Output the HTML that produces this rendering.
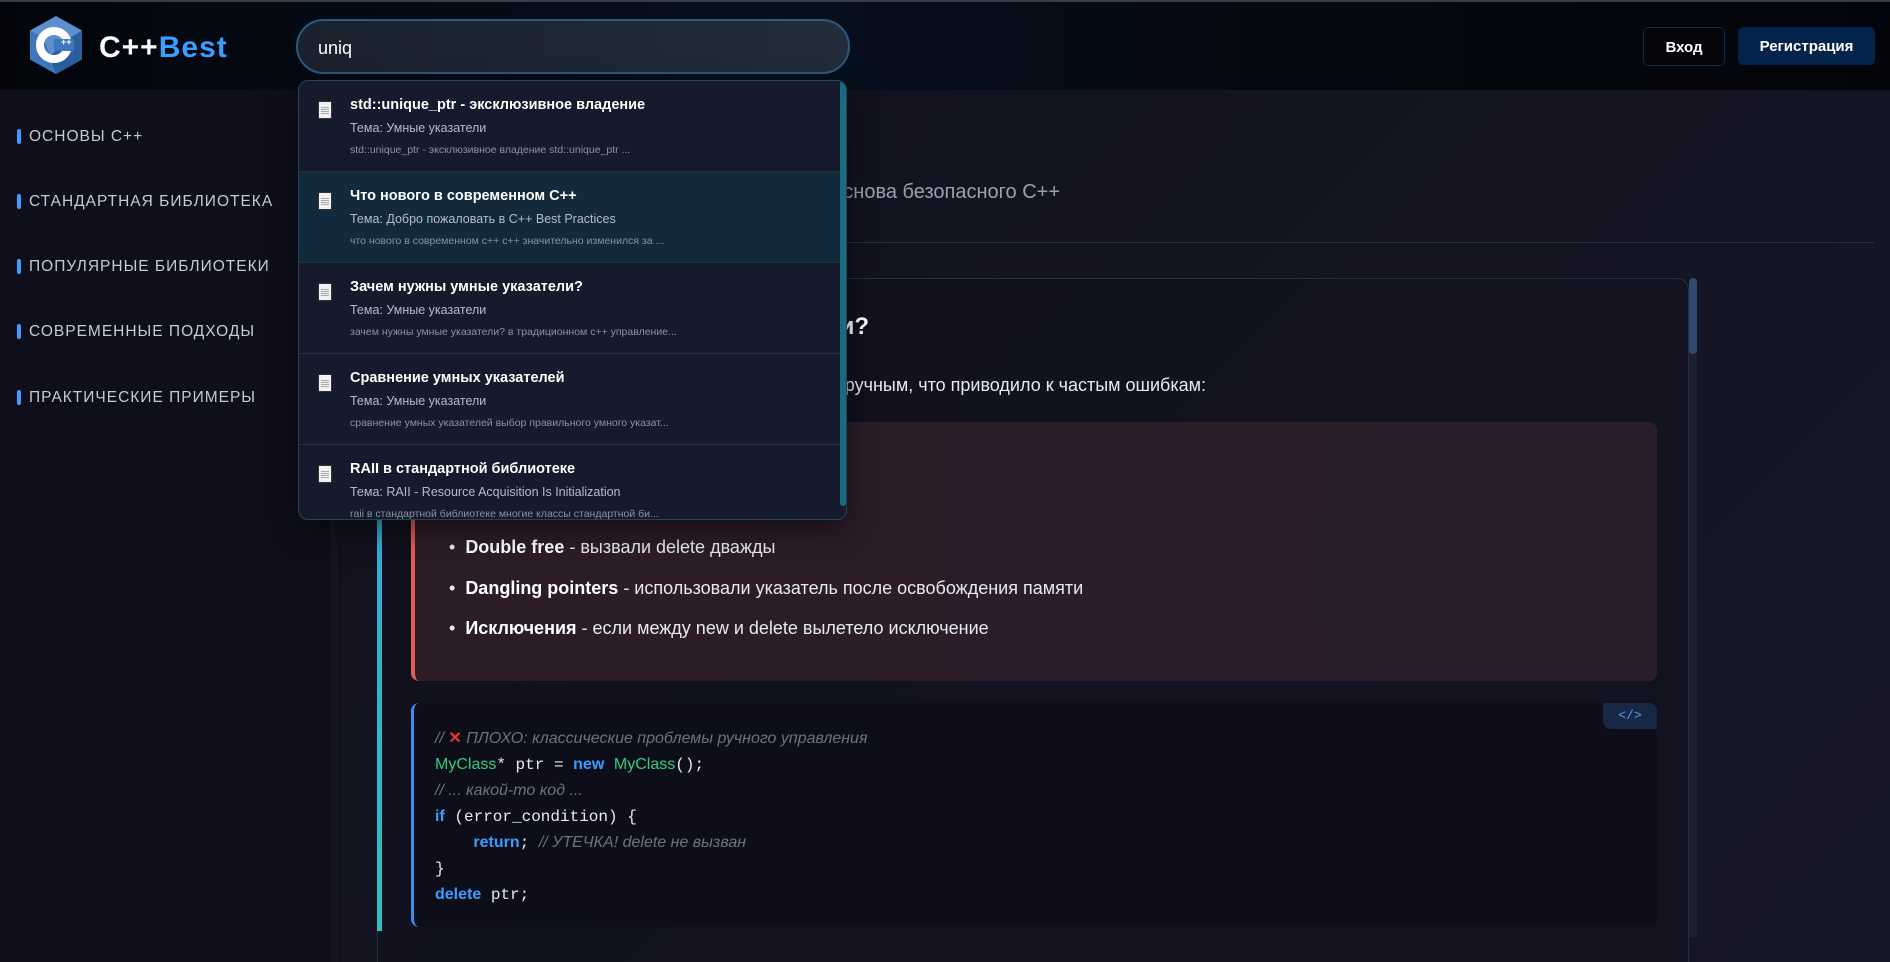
<!DOCTYPE html>
<html><head><meta charset="utf-8"><style>
*{margin:0;padding:0;box-sizing:border-box}
html{width:1890px;height:962px;overflow:hidden}
body{width:1890px;height:962px;overflow:hidden;background:#12121f;font-family:"Liberation Sans","Noto Sans CJK SC",sans-serif;position:relative;color:#e8eaf0}
.hdr{position:absolute;left:0;top:0;width:1890px;height:90px;background:linear-gradient(90deg,#03050a 0%,#061020 40%,#050810 70%,#03050a 100%);border-top:2px solid #3a3d48}
.side{position:absolute;left:0;top:90px;width:337px;height:872px;background:#0e0f1a;border-right:6px solid #15161f}
.main{position:absolute;left:343px;top:90px;width:1547px;height:872px;background:linear-gradient(135deg,#11111d,#161728)}
.nav{position:absolute;left:17px;font-size:15.5px;letter-spacing:1px;color:#c6cad4;text-transform:uppercase;font-weight:500}
.nav:before{content:"";position:absolute;left:0;top:1px;width:4px;height:15px;background:#3b9dff;border-radius:2px}
.nav span{margin-left:12px}
.abs{position:absolute;white-space:nowrap}
.dd{position:absolute;left:298px;top:80px;width:549px;height:440px;background:#151b2d;border:1px solid #1f4656;border-radius:10px;overflow:hidden;box-shadow:0 10px 30px rgba(0,0,0,.5)}
.it{position:absolute;left:0;width:543px;height:91px;border-bottom:1px solid #232c40}
.it .ic{position:absolute;left:19px;top:20px;width:14px;height:18px;background:#f2f2f2;border:1px solid #333}
.it .ic:after{content:"";position:absolute;left:2px;right:2px;top:4px;height:9px;background:repeating-linear-gradient(#f2f2f2 0 1px,#aaa 1px 2px)}
.it .t{position:absolute;left:51px;top:16px;font-size:14.5px;font-weight:bold;color:#fff;white-space:nowrap}
.it .s{position:absolute;left:51px;top:40px;font-size:12.5px;color:#b4bccb;white-space:nowrap}
.it .x{position:absolute;left:51px;top:63px;font-size:10.5px;color:#8a92a4;white-space:nowrap}
.code{font-family:"Liberation Mono",monospace;font-size:16px;color:#e8eaf0}
.cm{font-family:"Liberation Sans",sans-serif;font-style:italic;color:#6c7282;font-size:16px}
.kw{font-family:"Liberation Sans",sans-serif;font-weight:bold;color:#3b9dff;font-size:16px}
.ty{font-family:"Liberation Sans",sans-serif;color:#2fcf7f;font-size:16px}
</style></head><body>
<div class="hdr"></div>
<svg class="abs" style="left:30px;top:16px" width="52" height="58" viewBox="0 0 52 58">
<polygon points="26,0 52,14.5 52,43.5 26,58 0,43.5 0,14.5" fill="#5c8ed0"/>
<polygon points="52,14.5 52,43.5 26,58 10,49 40,22" fill="#2a5f9e"/>
<polygon points="26,58 0,43.5 0,14.5 14,22" fill="#3f77bb"/>
<circle cx="24" cy="29" r="14" fill="none" stroke="#fff" stroke-width="8"/>
<rect x="24" y="23" width="20" height="12" fill="#3f77bb"/>
<text x="31" y="29" font-size="9" fill="#fff" font-family="Liberation Sans" font-weight="bold">++</text>
</svg>
<div class="abs" style="left:99px;top:31px;font-size:30px;font-weight:bold;color:#fff;letter-spacing:1px">C++<span style="color:#3b9dff">Best</span></div>
<div class="abs" style="left:296px;top:19px;width:554px;height:55px;border:2px solid #2a5a80;border-radius:28px;background:linear-gradient(90deg,#1a222f,#222c3a)"></div>
<div class="abs" style="left:318px;top:38px;font-size:18px;color:#fff">uniq</div>
<div class="abs" style="left:1643px;top:27px;width:82px;height:39px;border:1px solid #0d2a48;border-radius:5px;color:#fff;font-weight:bold;font-size:15px;text-align:center;line-height:39px">Вход</div>
<div class="abs" style="left:1738px;top:27px;width:137px;height:38px;background:#04234a;border-radius:5px;color:#fff;font-weight:bold;font-size:15px;text-align:center;line-height:40px">Регистрация</div>

<div class="side"></div>
<div class="nav" style="top:128px"><span>Основы C++</span></div>
<div class="nav" style="top:193px"><span>Стандартная библиотека</span></div>
<div class="nav" style="top:258px"><span>Популярные библиотеки</span></div>
<div class="nav" style="top:323px"><span>Современные подходы</span></div>
<div class="nav" style="top:389px"><span>Практические примеры</span></div>

<div class="main"></div>
<div class="abs" style="left:380px;top:181px;width:680px;text-align:right;font-size:20px;color:#9aa0b2;font-weight:300">Умные указатели — основа безопасного C++</div>
<div class="abs" style="left:362px;top:242px;width:1512px;height:1px;background:#2a2c3c"></div>
<div class="abs" style="left:377px;top:278px;width:1312px;height:684px;border:1px solid #2a2d3e;border-bottom:none;border-radius:12px 12px 0 0;background:rgba(16,17,30,.6)"></div>
<div class="abs" style="left:377px;top:286px;width:5px;height:645px;background:linear-gradient(#3b9de0,#2ec0c0)"></div>
<div class="abs" style="left:1689px;top:278px;width:8px;height:660px;background:#1e2030;border-radius:4px"></div>
<div class="abs" style="left:1689px;top:278px;width:8px;height:76px;background:#2d4a6e;border-radius:4px"></div>
<div class="abs" style="left:411px;top:313px;width:458px;text-align:right;font-size:24px;font-weight:bold;color:#fff">Зачем нужны умные указатели?</div>
<div class="abs" style="left:411px;top:375px;width:795px;text-align:right;font-size:18px;color:#e8eaf0">В C++ управление памятью было ручным, что приводило к частым ошибкам:</div>

<div class="abs" style="left:411px;top:422px;width:1246px;height:259px;background:linear-gradient(90deg,#2c1c26,#2a1d2c);border-left:4px solid #e55a5a;border-radius:8px"></div>
<div class="abs" style="left:449px;top:537px;font-size:18px;color:#e8eaf0;line-height:20px">
<div style="position:absolute;top:-40px;white-space:nowrap">•&nbsp;&nbsp;<b>Утечки памяти</b> - забыли вызвать delete</div>
<div style="position:absolute;top:0;white-space:nowrap">•&nbsp;&nbsp;<b style="color:#fff">Double free</b> - вызвали delete дважды</div>
<div style="position:absolute;top:41px;white-space:nowrap">•&nbsp;&nbsp;<b style="color:#fff">Dangling pointers</b> - использовали указатель после освобождения памяти</div>
<div style="position:absolute;top:81px;white-space:nowrap">•&nbsp;&nbsp;<b style="color:#fff">Исключения</b> - если между new и delete вылетело исключение</div>
</div>

<div class="abs" style="left:411px;top:703px;width:1246px;height:224px;background:#0d0e19;border-left:3px solid #3b8ee8;border-radius:8px"></div>
<div class="abs" style="left:1603px;top:703px;width:54px;height:26px;background:#182844;border-radius:0 8px 0 8px;color:#4a9eff;font-family:'Liberation Mono',monospace;font-size:13px;text-align:center;line-height:26px">&lt;/&gt;</div>
<div class="abs code" style="left:435px;top:726px;line-height:26px">
<div><span class="cm">// <span style="color:#e8392c;font-style:normal;font-weight:bold">✕</span> ПЛОХО: классические проблемы ручного управления</span></div>
<div><span class="ty">MyClass</span>* ptr = <span class="kw">new</span> <span class="ty">MyClass</span>();</div>
<div><span class="cm">// ... какой-то код ...</span></div>
<div><span class="kw">if</span> (error_condition) {</div>
<div>&nbsp;&nbsp;&nbsp;&nbsp;<span class="kw">return</span>; <span class="cm">// УТЕЧКА! delete не вызван</span></div>
<div>}</div>
<div><span class="kw">delete</span> ptr;</div>
</div>

<div class="dd">
<div class="it" style="top:0"><div class="ic"></div><div class="t">std::unique_ptr - эксклюзивное владение</div><div class="s">Тема: Умные указатели</div><div class="x">std::unique_ptr - эксклюзивное владение std::unique_ptr ...</div></div>
<div class="it" style="top:91px;background:#132a3c"><div class="ic"></div><div class="t">Что нового в современном C++</div><div class="s">Тема: Добро пожаловать в C++ Best Practices</div><div class="x">что нового в современном c++ c++ значительно изменился за ...</div></div>
<div class="it" style="top:182px"><div class="ic"></div><div class="t">Зачем нужны умные указатели?</div><div class="s">Тема: Умные указатели</div><div class="x">зачем нужны умные указатели? в традиционном c++ управление...</div></div>
<div class="it" style="top:273px"><div class="ic"></div><div class="t">Сравнение умных указателей</div><div class="s">Тема: Умные указатели</div><div class="x">сравнение умных указателей выбор правильного умного указат...</div></div>
<div class="it" style="top:364px;border:none"><div class="ic"></div><div class="t">RAII в стандартной библиотеке</div><div class="s">Тема: RAII - Resource Acquisition Is Initialization</div><div class="x">raii в стандартной библиотеке многие классы стандартной би...</div></div>
<div style="position:absolute;right:0;top:0;width:6px;height:425px;background:#1a6a80;border-radius:3px"></div>
</div>
</body></html>
